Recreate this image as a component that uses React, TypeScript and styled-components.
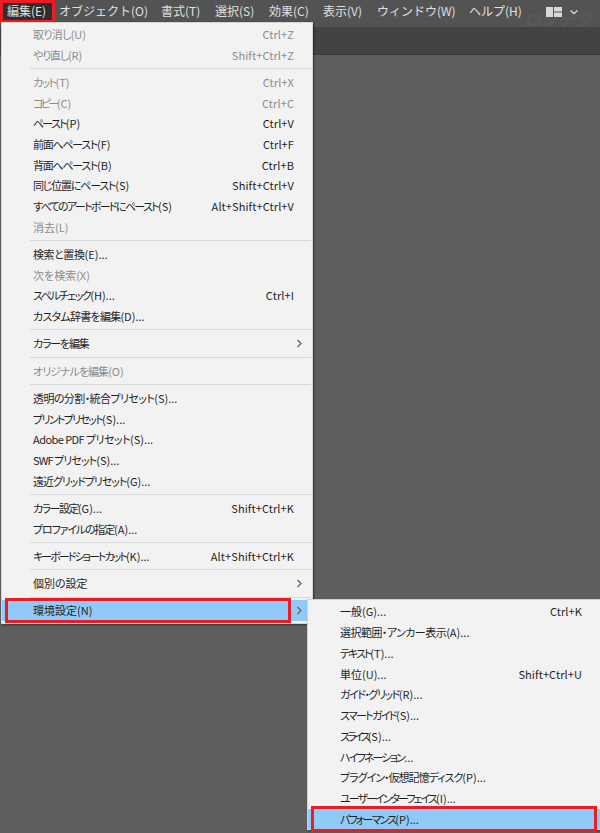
import React from "react";
import styled, { createGlobalStyle } from "styled-components";

const GlobalStyle = createGlobalStyle`
  html, body {
    margin: 0;
    padding: 0;
    background: #5e5e5e;
  }
  body {
    font-family: "Noto Sans CJK JP", "Noto Sans", sans-serif;
    overflow: hidden;
  }
`;

const Page = styled.div`
  position: relative;
  width: 600px;
  height: 833px;
  overflow: hidden;
  background: #5e5e5e;
`;

const MenuBar = styled.div`
  display: flex;
  align-items: flex-start;
  height: 27px;
  background: #535353;
  box-sizing: border-box;
  padding-left: 7px;
`;

const BarItem = styled.div<{ $w: number }>`
  position: relative;
  width: ${(p) => p.$w}px;
  flex: none;
  height: 22px;
  line-height: 21px;
  font-size: 12px;
  color: #e0e0e0;
  white-space: nowrap;
`;

const ActiveMark = styled.span`
  position: absolute;
  left: -7px;
  top: 0;
  width: 55px;
  height: 23px;
  box-sizing: border-box;
  border: 3px solid #ed1c24;
  background: #2e2e2e;
`;

const BarLabel = styled.span`
  position: relative;
`;

const WorkspaceIcon = styled.svg`
  margin-left: 15px;
  margin-top: 6px;
  flex: none;
`;

const Watermark = styled.span`
  position: absolute;
  left: 524px;
  top: 9px;
  font-size: 17px;
  line-height: 20px;
  font-weight: 900;
  font-style: italic;
  color: rgba(255, 255, 255, 0.05);
  white-space: nowrap;
`;

const ToolStrip = styled.div`
  height: 28px;
  background: #434343;
  border-bottom: 1px solid #3a3a3a;
  box-sizing: border-box;
`;

const Popup = styled.div<{ $left: number; $top: number; $w: number; $pad: number }>`
  position: absolute;
  left: ${(p) => p.$left}px;
  top: ${(p) => p.$top}px;
  width: ${(p) => p.$w}px;
  box-sizing: border-box;
  padding-top: ${(p) => p.$pad}px;
  background: #f2f2f2;
  border: 1px solid #d4d4d4;
  box-shadow: 1px 1px 2px rgba(0, 0, 0, 0.45);
`;

const Row = styled.div<{ $hi?: boolean; $muted?: boolean }>`
  position: relative;
  display: flex;
  align-items: center;
  justify-content: space-between;
  height: 20.7px;
  box-sizing: border-box;
  padding: 0 18px 0 31px;
  font-size: 11px;
  font-feature-settings: "palt";
  white-space: nowrap;
  color: ${(p) => (p.$muted ? "#8c8c8c" : "#1f1f1f")};
  background: ${(p) => (p.$hi ? "#91c9f7" : "transparent")};
`;

const SubRow = styled(Row)`
  height: 20.75px;
  padding: 0 18px 0 32px;
`;

// kana in the original UI font run narrower than Noto's, so the words get squeezed
const Squeezed = styled.span<{ $squeeze: number }>`
  letter-spacing: ${(p) => p.$squeeze}px;
`;

const Shortcut = styled.span`
  letter-spacing: 0.1px;
`;

const Arrow = styled.svg`
  position: absolute;
  right: 9px;
  top: 6px;
`;

const Divider = styled.div`
  height: 1px;
  margin: 3px 1px 2.6px 28px;
  background: #d9d9d9;
`;

const RedBox = styled.span<{ $w: number; $h: number; $left: number; $top: number }>`
  position: absolute;
  left: ${(p) => p.$left}px;
  top: ${(p) => p.$top}px;
  width: ${(p) => p.$w}px;
  height: ${(p) => p.$h}px;
  box-sizing: border-box;
  border: 3px solid #ed1c24;
`;

const LastRow = styled(Row)`
  margin-bottom: 2.4px;
`;

type Item = { label?: string; keys?: string; muted?: boolean; sub?: boolean; sq?: number };

const mainItems: Item[] = [
  { label: "取り消し(U)", keys: "Ctrl+Z", muted: true, sq: -0.4 },
  { label: "やり直し(R)", keys: "Shift+Ctrl+Z", muted: true, sq: -0.7 },
  {},
  { label: "カット(T)", keys: "Ctrl+X", muted: true, sq: -0.8 },
  { label: "コピー(C)", keys: "Ctrl+C", muted: true, sq: -1.3 },
  { label: "ペースト(P)", keys: "Ctrl+V", sq: -1 },
  { label: "前面へペースト(F)", keys: "Ctrl+F", sq: -0.9 },
  { label: "背面へペースト(B)", keys: "Ctrl+B", sq: -0.9 },
  { label: "同じ位置にペースト(S)", keys: "Shift+Ctrl+V", sq: -0.9 },
  { label: "すべてのアートボードにペースト(S)", keys: "Alt+Shift+Ctrl+V", sq: -1.4 },
  { label: "消去(L)", muted: true },
  {},
  { label: "検索と置換(E)...", sq: -0.2 },
  { label: "次を検索(X)", muted: true },
  { label: "スペルチェック(H)...", keys: "Ctrl+I", sq: -0.85 },
  { label: "カスタム辞書を編集(D)...", sq: -0.45 },
  {},
  { label: "カラーを編集", sub: true, sq: -1.2 },
  {},
  { label: "オリジナルを編集(O)", muted: true, sq: -0.7 },
  {},
  { label: "透明の分割・統合プリセット(S)...", sq: -0.4 },
  { label: "プリントプリセット(S)...", sq: -1 },
  { label: "Adobe PDF プリセット(S)...", sq: -0.4 },
  { label: "SWF プリセット(S)...", sq: -0.55 },
  { label: "遠近グリッドプリセット(G)...", sq: -0.7 },
  {},
  { label: "カラー設定(G)...", keys: "Shift+Ctrl+K", sq: -0.7 },
  { label: "プロファイルの指定(A)...", sq: -0.7 },
  {},
  { label: "キーボードショートカット(K)...", keys: "Alt+Shift+Ctrl+K", sq: -1.3 },
  {},
  { label: "個別の設定", sub: true },
];

const subItems: Item[] = [
  { label: "一般(G)...", keys: "Ctrl+K" },
  { label: "選択範囲・アンカー表示(A)...", sq: -0.35 },
  { label: "テキスト(T)...", sq: -0.8 },
  { label: "単位(U)...", keys: "Shift+Ctrl+U" },
  { label: "ガイド・グリッド(R)...", sq: -0.85 },
  { label: "スマートガイド(S)...", sq: -0.9 },
  { label: "スライス(S)...", sq: -1.1 },
  { label: "ハイフネーション...", sq: -1.3 },
  { label: "プラグイン・仮想記憶ディスク(P)...", sq: -0.7 },
  { label: "ユーザーインターフェイス(I)...", sq: -1.3 },
];

const barItems: [string, number][] = [
  ["オブジェクト(O)", 102],
  ["書式(T)", 54],
  ["選択(S)", 54],
  ["効果(C)", 54],
  ["表示(V)", 54],
  ["ウィンドウ(W)", 92],
  ["ヘルプ(H)", 62],
];

const Chevron = () => (
  <Arrow width="7" height="9" viewBox="0 0 7 9">
    <path d="M1.5 1 L5 4.5 L1.5 8" fill="none" stroke="#666" strokeWidth="1.3" />
  </Arrow>
);

// only the words are squeezed, "(S)..." keeps its normal spacing
const Label = ({ text, sq = 0 }: { text: string; sq?: number }) => {
  const tail = text.match(/(\(.\))?(\.\.\.)?$/)?.[0] ?? "";
  const head = text.slice(0, text.length - tail.length);
  return (
    <span>
      <Squeezed $squeeze={(sq * text.length) / head.length}>{head}</Squeezed>
      {tail}
    </span>
  );
};

export default function App() {
  return (
    <Page>
      <GlobalStyle />
      <MenuBar>
        <BarItem $w={52}>
          <ActiveMark />
          <BarLabel>編集(E)</BarLabel>
        </BarItem>
        {barItems.map(([label, w]) => (
          <BarItem key={label} $w={w}>
            {label}
          </BarItem>
        ))}
        <WorkspaceIcon width="32" height="12" viewBox="0 0 32 12">
          <rect x="0" y="1" width="7" height="10" fill="#d8d8d8" />
          <rect x="8" y="1" width="8" height="4.5" fill="#d8d8d8" />
          <rect x="8" y="6.5" width="8" height="4.5" fill="#d8d8d8" />
          <path d="M24.5 4.5 L28 7.5 L31.5 4.5" fill="none" stroke="#d8d8d8" strokeWidth="1.4" />
        </WorkspaceIcon>
      </MenuBar>
      <Watermark>ロジテク</Watermark>
      <ToolStrip />

      <Popup $left={1} $top={22} $w={312} $pad={0.6}>
        {mainItems.map((item, i) =>
          item.label ? (
            <Row key={i} $muted={item.muted}>
              <Label text={item.label} sq={item.sq} />
              {item.keys && <Shortcut>{item.keys}</Shortcut>}
              {item.sub && <Chevron />}
            </Row>
          ) : (
            <Divider key={i} />
          )
        )}
        <Divider />
        <LastRow $hi>
          <Label text="環境設定(N)" />
          <RedBox $left={3} $top={-2} $w={286} $h={25} />
          <Chevron />
        </LastRow>
      </Popup>

      <Popup $left={307} $top={599} $w={294} $pad={1}>
        {subItems.map((item) => (
          <SubRow key={item.label}>
            <Label text={item.label as string} sq={item.sq} />
            {item.keys && <Shortcut>{item.keys}</Shortcut>}
          </SubRow>
        ))}
        <SubRow $hi>
          <Label text="パフォーマンス(P)..." sq={-1} />
          <RedBox $left={3} $top={-3} $w={286} $h={26} />
        </SubRow>
      </Popup>
    </Page>
  );
}
